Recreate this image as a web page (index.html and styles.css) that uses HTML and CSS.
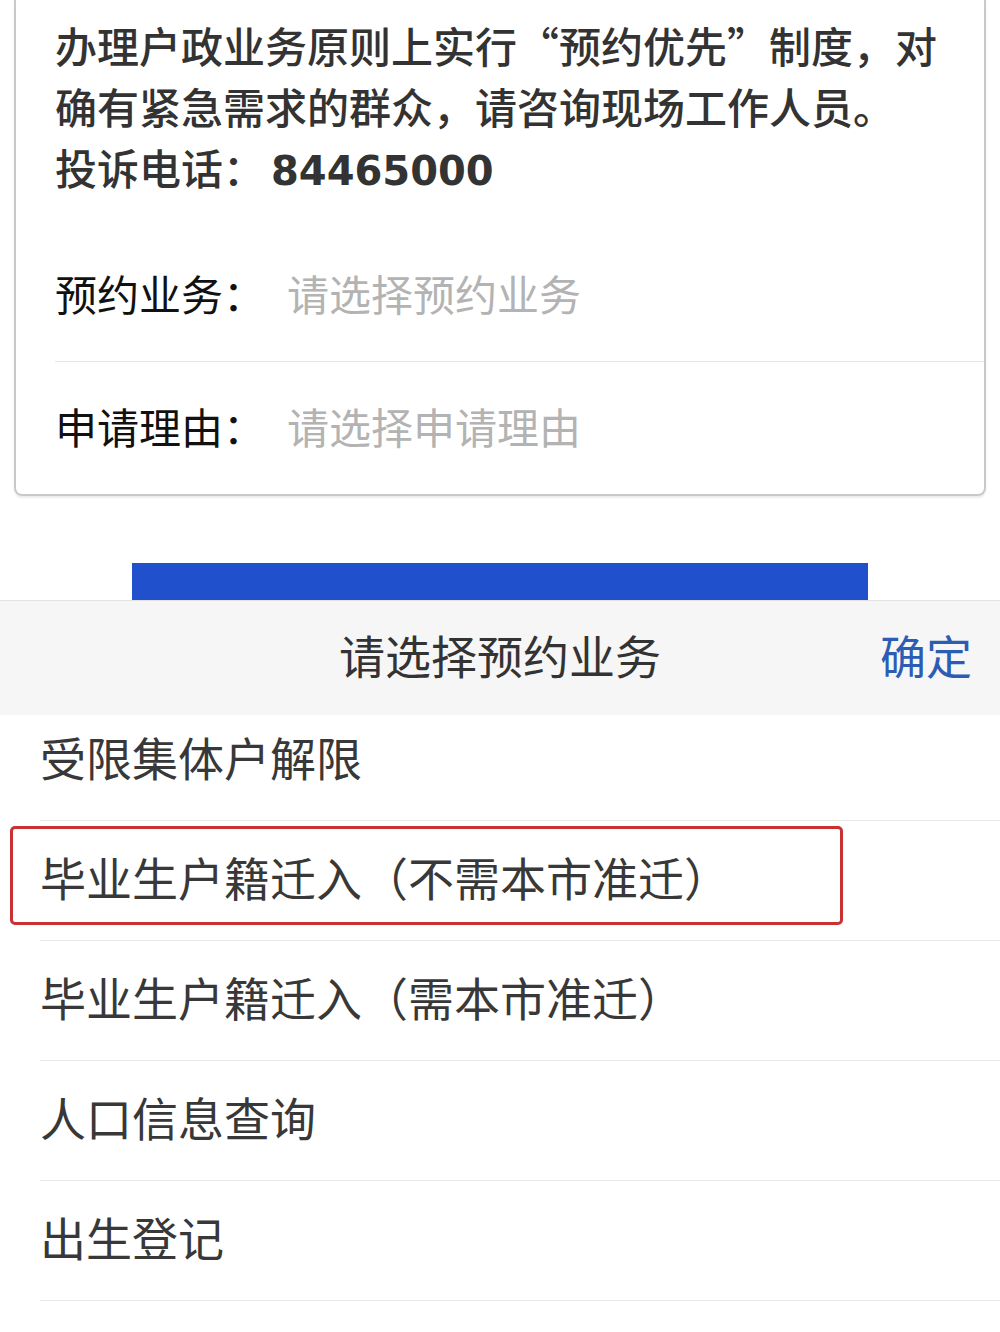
FILE: index.html
```html
<!DOCTYPE html>
<html lang="zh-CN">
  <head>
    <meta charset="UTF-8" />
    <title>预约业务</title>
    <link rel="stylesheet" href="styles.css">
  </head>
  <body>
    <div class="card">
      <p class="notice">
        办理户政业务原则上实行“预约优先”制度，对<br>确有紧急需求的群众，请咨询现场工作人员。<br>投诉电话：<span class="phone">84465000</span>
      </p>
      <div class="row">
        <span class="label">预约业务：</span>
        <span class="placeholder">请选择预约业务</span>
      </div>
      <div class="row">
        <span class="label">申请理由：</span>
        <span class="placeholder">请选择申请理由</span>
      </div>
    </div>

    <div class="submit"></div>

    <!-- 业务选择弹层 -->
    <div class="sheet">
      <div class="sheet-head">
        <span class="sheet-title">请选择预约业务</span>
        <span class="sheet-ok">确定</span>
      </div>
      <div class="sheet-body">
        <ul class="options">
          <li>受限集体户解限</li>
          <li class="picked">毕业生户籍迁入（不需本市准迁）<span class="mark"></span></li>
          <li>毕业生户籍迁入（需本市准迁）</li>
          <li>人口信息查询</li>
          <li>出生登记</li>
        </ul>
      </div>
    </div>
  </body>
</html>
```

FILE: styles.css
```css
body {
  margin: 0;
  background: #fff;
  font-family: 'Noto Sans CJK SC', 'Noto Sans', sans-serif;
  color: #333;
}

.card {
  margin: 0 14px;
  padding-left: 39px;
  border: 2px solid #c9c9c9;
  border-top: none;
  border-radius: 0 0 8px 8px;
  box-shadow: 0 2px 2px rgba(0, 0, 0, 0.08);
}

.notice {
  margin: 0;
  padding: 14px 20px 0 0;
  font-size: 42px;
  line-height: 61px;
  font-weight: 500;
  color: #333;
  white-space: nowrap;
}

.phone {
  margin-left: 6px;
  font-family: 'DejaVu Sans', sans-serif;
  font-weight: bold;
  font-size: 40px;
  line-height: 1;
}

.row {
  height: 132px;
  padding-bottom: 6px;
  box-sizing: border-box;
  display: flex;
  align-items: center;
  font-size: 42px;
}

.row:first-of-type {
  margin-top: 33px;
  border-bottom: 1px solid #e6e6e6;
}

.label {
  color: #111;
}

.placeholder {
  margin-left: 22px;
  color: #b3b3b3;
}

.submit {
  width: 736px;
  height: 37px;
  margin: 67px auto 0;
  background: #2150cc;
}

.sheet-head {
  height: 115px;
  padding-bottom: 8px;
  box-sizing: border-box;
  border-top: 1px solid #e4e4e4;
  background: #f6f6f6;
  display: flex;
  align-items: center;
  justify-content: center;
  position: relative;
  font-size: 46px;
}

.sheet-title {
  color: #333;
}

.sheet-ok {
  position: absolute;
  right: 28px;
  color: #2d5db3;
}

.sheet-body {
  overflow: hidden;
}

.options {
  list-style: none;
  margin: -14px 0 0;
  padding: 0;
}

.options li {
  position: relative;
  margin-left: 40px;
  height: 119px;
  line-height: 110px;
  border-bottom: 1px solid #e8e8e8;
  font-size: 46px;
  color: #383838;
}

.mark {
  position: absolute;
  left: -30px;
  top: 5px;
  width: 833px;
  height: 99px;
  box-sizing: border-box;
  border: 3px solid #c93232;
  border-radius: 5px;
}
```
